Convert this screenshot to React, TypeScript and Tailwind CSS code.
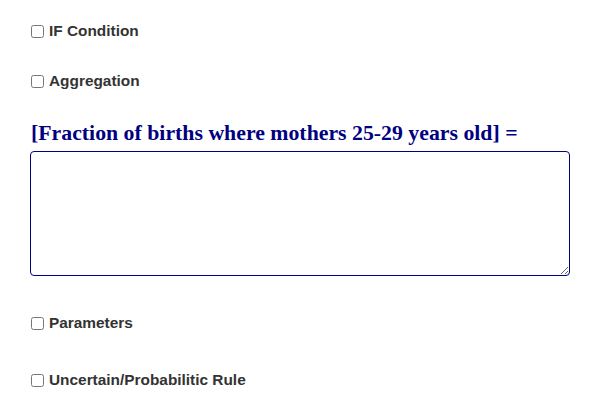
import React from 'react';

const Option: React.FC<{ label: string; className?: string }> = ({ label, className }) => (
  <label className={`flex h-[18px] items-center gap-[5px] text-[15.4px] font-bold leading-[18px] text-[#333] ${className ?? ''}`}>
    <input type="checkbox" className="m-0 ml-[1px] h-[13px] w-[13px]" />
    <span>{label}</span>
  </label>
);

export default function App() {
  return (
    <div className="min-h-[416px] bg-white pl-[30px] pr-[25px] pt-[22px] font-['Liberation_Sans',Arial,sans-serif]">
      <Option label="IF Condition" />
      <Option label="Aggregation" className="mt-[32px]" />
      <h2 className="mt-[30px] pl-[1px] font-['Liberation_Serif',serif] text-[21.8px] font-bold leading-[26px] text-[#000080]">
        [Fraction of births where mothers 25-29 years old] =
      </h2>
      <textarea className="mt-[5px] block h-[125px] w-full rounded-[4px] border border-[#000080] bg-white" />
      <Option label="Parameters" className="mt-[38px]" />
      <Option label="Uncertain/Probabilitic Rule" className="mt-[39px]" />
    </div>
  );
}
